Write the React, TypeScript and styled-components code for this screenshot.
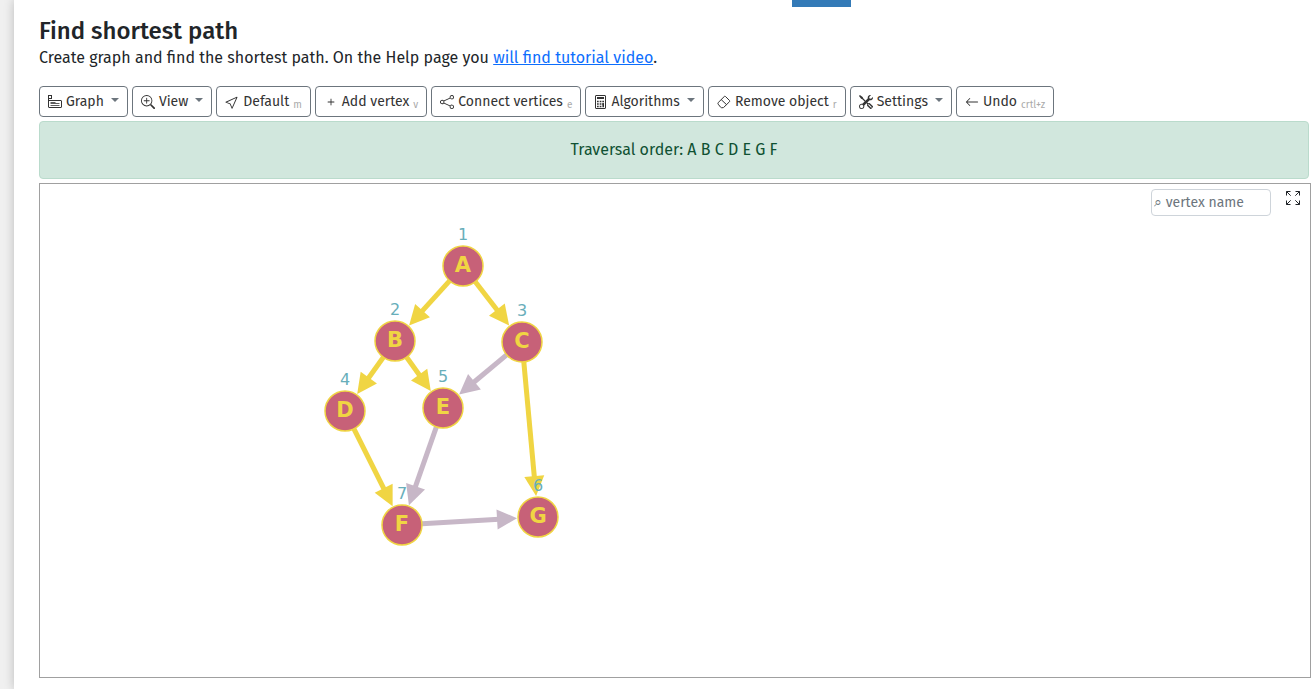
import React from 'react';
import styled, { createGlobalStyle } from 'styled-components';
import {
  BsZoomIn,
  BsCursor,
  BsPlus,
  BsShare,
  BsTools,
  BsArrowLeft,
} from 'react-icons/bs';

const GlobalStyle = createGlobalStyle`
  *, *::before, *::after { box-sizing: border-box; }
  body {
    margin: 0;
    background: #f0f0f0;
    color: #212529;
    font-family: "Fira Sans", "Noto Sans", sans-serif;
    font-size: 16px;
    line-height: 24px;
  }
`;

const Page = styled.div`
  display: flex;
  min-height: 100vh;
  padding-left: 14px;
`;

const Content = styled.main`
  flex: 1;
  min-width: 0;
  display: flex;
  flex-direction: column;
  padding: 0 1px 11px 25px;
  background: #fff;
  box-shadow: 0 0 10px rgba(0, 0, 0, 0.22);
`;

const TopStrip = styled.div`
  display: flex;
  justify-content: center;
  height: 16px;
`;

const ActiveMark = styled.div`
  width: 59px;
  height: 7px;
  margin-left: 292px;
  background: #337ab7;
`;

const Title = styled.h1`
  margin: 0;
  font-size: 24px;
  font-weight: 500;
  line-height: 30px;
`;

const Intro = styled.p`
  margin: 0;
  font-size: 16px;
  white-space: nowrap;
`;

const Link = styled.a`
  color: #0d6efd;
  text-decoration: underline;
`;

const Toolbar = styled.div`
  display: flex;
  flex-wrap: wrap;
  gap: 4px;
  margin-top: 16px;
`;

const ToolButton = styled.button`
  display: flex;
  align-items: center;
  gap: 4px;
  height: 31px;
  padding: 0 8px;
  border: 1px solid #6c757d;
  border-radius: 4px;
  background: #fff;
  color: #333;
  font-family: inherit;
  font-size: 14px;
  line-height: 21px;
  white-space: nowrap;

  svg { flex: none; }
`;

const Caret = styled.span`
  margin: 0 0 3px 3px;
  border-top: 4px solid #6c757d;
  border-left: 4px solid transparent;
  border-right: 4px solid transparent;
`;

const Shortcut = styled.span`
  padding-top: 8px;
  color: #aaa;
  font-size: 10px;
`;

const Message = styled.div`
  margin: 4px 2px 4px 0;
  padding: 16px;
  border: 1px solid #badbcc;
  border-radius: 4px;
  background: #d1e7dd;
  color: #0f5132;
  text-align: center;
`;

const Board = styled.section`
  position: relative;
  flex: 1;
  min-height: 400px;
  border: 1px solid #a0a0a0;
`;

const BoardTools = styled.div`
  position: absolute;
  top: 5px;
  right: 8px;
  display: flex;
  gap: 15px;
`;

const SearchInput = styled.input`
  width: 120px;
  height: 27px;
  padding: 0 2px;
  border: 1px solid #ced4da;
  border-radius: 4px;
  background: #fff;
  color: #212529;
  font-family: inherit;
  font-size: 14px;

  &::placeholder { color: #6c757d; opacity: 1; }
`;

const IconButton = styled.button`
  display: flex;
  width: 16px;
  height: 18px;
  padding: 2px 0 0;
  border: 0;
  background: none;
  color: #212529;
`;

const Drawing = styled.svg`
  position: absolute;
  top: 0;
  left: 0;
  width: 100%;
  height: 100%;
  font-family: "DejaVu Sans", sans-serif;
`;

const VertexName = styled.text`
  font-size: 21px;
  font-weight: 700;
  fill: #f0d543;
`;

const GraphIcon = () => (
  <svg width="14" height="14" viewBox="0 0 14 14" fill="none" stroke="currentColor">
    <rect x="0.5" y="0.5" width="3" height="3" />
    <path d="M.5 3.500V12q0 .5.500.5h12q.5 0 .5-.5V6q0-.5-.5-.5H.5" />
    <path d="M2.500 7.500h5M2.500 8.500h9M2.500 10.500h9" strokeWidth="0.8" />
  </svg>
);

const CalculatorIcon = () => (
  <svg width="13" height="14" viewBox="-1 0 13 14" fill="none" stroke="currentColor">
    <rect x="0.5" y="0.5" width="10" height="13" rx="0.5" />
    <path d="M2 3h7" strokeWidth="2" />
    <path d="M2 6.500h1.700M4.700 6.500h1.700M7.300 6.500H9M2 9h1.700M4.700 9h1.700M7.300 9H9M2 11.500h1.700M4.700 11.500h1.700" strokeWidth="1.500" />
    <path d="M8.200 8.300v4" strokeWidth="1.600" />
  </svg>
);

const EraserIcon = () => (
  <svg width="14" height="14" viewBox="0 0 14 14" fill="none" stroke="currentColor" strokeLinejoin="round">
    <path d="M1.200 7.600 7.300 1.500q.6-.6 1.200 0l4 4q.6.6 0 1.200L6.800 12.300q-.4.400-.8.400H4.500q-.4 0-.8-.4L1.200 9.200q-.6-.8 0-1.600ZM4.200 4.600l5.300 5" />
  </svg>
);

const FullscreenIcon = () => (
  <svg width="14" height="14" viewBox="0 0 14 14" fill="none" stroke="currentColor">
    <path d="M.5 4.500v-4h4M.5.5l4.200 4.200M9.500.5h4v4M13.500.5 9.300 4.700M.5 9.500v4h4M.5 13.500l4.200-4.200M9.500 13.500h4v-4M13.500 13.500 9.300 9.300" />
  </svg>
);

type Tool = {
  label: string;
  icon: React.ReactNode;
  menu?: boolean;
  shortcut?: string;
};

const tools: Tool[] = [
  { label: 'Graph', icon: <GraphIcon />, menu: true },
  { label: 'View', icon: <BsZoomIn size={14} />, menu: true },
  { label: 'Default', icon: <BsCursor size={14} />, shortcut: 'm' },
  { label: 'Add vertex', icon: <BsPlus size={14} />, shortcut: 'v' },
  { label: 'Connect vertices', icon: <BsShare size={14} />, shortcut: 'e' },
  { label: 'Algorithms', icon: <CalculatorIcon />, menu: true },
  { label: 'Remove object', icon: <EraserIcon />, shortcut: 'r' },
  { label: 'Settings', icon: <BsTools size={14} />, menu: true },
  { label: 'Undo', icon: <BsArrowLeft size={14} />, shortcut: 'crtl+z' },
];

type Vertex = { name: string; x: number; y: number; order: number };

const vertices: Vertex[] = [
  { name: 'A', x: 423, y: 82, order: 1 },
  { name: 'B', x: 355, y: 157, order: 2 },
  { name: 'C', x: 482, y: 158, order: 3 },
  { name: 'D', x: 305, y: 227, order: 4 },
  { name: 'E', x: 403, y: 224, order: 5 },
  { name: 'G', x: 498, y: 333, order: 6 },
  { name: 'F', x: 362, y: 341, order: 7 },
];

const edges: { path: string; visited: boolean }[] = [
  { path: 'AB', visited: true },
  { path: 'AC', visited: true },
  { path: 'BD', visited: true },
  { path: 'BE', visited: true },
  { path: 'CE', visited: false },
  { path: 'CG', visited: true },
  { path: 'DF', visited: true },
  { path: 'EF', visited: false },
  { path: 'FG', visited: false },
];

const find = (name: string) => vertices.find((v) => v.name === name)!;

const Edge = ({ path, visited }: { path: string; visited: boolean }) => {
  const from = find(path[0]);
  const to = find(path[1]);
  const length = Math.hypot(to.x - from.x, to.y - from.y);
  const angle = (Math.atan2(to.y - from.y, to.x - from.x) * 180) / Math.PI;
  const color = visited ? '#f0d543' : '#c7b7c7';
  const tip = length - 21;
  return (
    <g transform={`translate(${from.x} ${from.y}) rotate(${angle})`}>
      <line x1="20" x2={tip - 18} stroke={color} strokeWidth="5" />
      <polygon points={`${tip},0 ${tip - 20},-10 ${tip - 20},10`} fill={color} />
    </g>
  );
};

export default function App() {
  return (
    <>
      <GlobalStyle />
      <Page>
        <Content>
          <TopStrip>
            <ActiveMark />
          </TopStrip>
          <Title>Find shortest path</Title>
          <Intro>
            Create graph and find the shortest path. On the Help page you{' '}
            <Link href="#tutorial">will find tutorial video</Link>.
          </Intro>
          <Toolbar>
            {tools.map((tool) => (
              <ToolButton key={tool.label} type="button">
                {tool.icon}
                <span>{tool.label}</span>
                {tool.menu && <Caret />}
                {tool.shortcut && <Shortcut>{tool.shortcut}</Shortcut>}
              </ToolButton>
            ))}
          </Toolbar>
          <Message role="status">Traversal order: A B C D E G F</Message>
          <Board>
            <Drawing role="img" aria-label="Graph">
              {edges.map((edge) => (
                <Edge key={edge.path} {...edge} />
              ))}
              {vertices.map((v) => (
                <g key={v.name} textAnchor="middle">
                  <circle cx={v.x} cy={v.y} r="20" fill="#c76178" stroke="#f0d543" strokeWidth="1.500" />
                  <VertexName x={v.x} y={v.y + 6}>
                    {v.name}
                  </VertexName>
                  <text x={v.x} y={v.y - 26} fill="#68aeba" fontSize="16">
                    {v.order}
                  </text>
                </g>
              ))}
            </Drawing>
            <BoardTools>
              <SearchInput type="text" aria-label="Vertex name" placeholder="⌕ vertex name" />
              <IconButton type="button" aria-label="Full screen">
                <FullscreenIcon />
              </IconButton>
            </BoardTools>
          </Board>
        </Content>
      </Page>
    </>
  );
}
